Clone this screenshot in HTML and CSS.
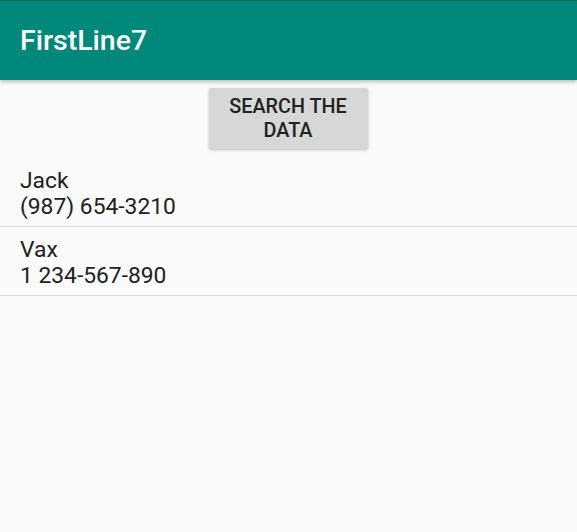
FILE: index.html
```html
<!DOCTYPE html>
<html>
<head>
<meta charset="utf-8">
<link rel="stylesheet" href="styles.css">
</head>
<body>
<header class="appbar"><h1 class="title">FirstLine7</h1></header>
<main class="content">
  <div class="btn-row"><button class="btn">SEARCH THE DATA</button></div>
  <ul class="list">
    <li class="item"><div class="name">Jack</div><div class="phone">(987) 654-3210</div></li>
    <li class="item"><div class="name">Vax</div><div class="phone">1 234-567-890</div></li>
  </ul>
</main>
</body>
</html>
```
FILE: styles.css
```css
html, body { margin: 0; padding: 0; }
body {
  background: #fafafa;
  font-family: Roboto, "Noto Sans", sans-serif;
  width: 577px;
  height: 532px;
  overflow: hidden;
}
.appbar {
  height: 80px;
  background: #00897b;
  border-top: 1px solid #00695c;
  box-sizing: border-box;
  display: flex;
  align-items: center;
  padding-left: 20px;
  box-shadow: 0 2px 4px rgba(0,0,0,0.25);
  position: relative;
  z-index: 1;
}
.title {
  margin: 0;
  color: #fff;
  font-size: 28.5px;
  font-weight: 500;
}
.btn-row {
  display: flex;
  justify-content: center;
  padding-top: 8px;
  padding-right: 1px;
}
.btn {
  width: 159px;
  height: 61px;
  background: #d6d7d7;
  border: none;
  border-radius: 2px;
  box-shadow: 0 1px 3px rgba(0,0,0,0.25);
  font-family: Roboto, sans-serif;
  font-weight: 500;
  font-size: 19.8px;
  line-height: 24px;
  color: #222;
  padding: 0 6px;
}
.list {
  list-style: none;
  margin: 0;
  padding: 0;
  margin-top: 9px;
}
.item {
  box-sizing: border-box;
  padding: 3px 20px 0;
  height: 69px;
  border-bottom: 1px solid #d9d9d9;
  font-size: 22.8px;
  line-height: 26px;
  color: #212121;
  display: flex;
  flex-direction: column;
  justify-content: center;
}
```
